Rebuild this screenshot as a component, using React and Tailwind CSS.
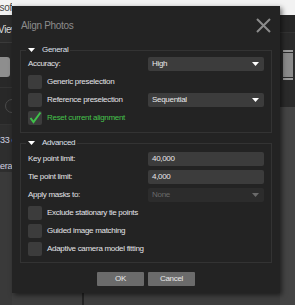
import React from 'react';

const Tri = ({ color = '#ffffff' }) => (
  <svg width="7" height="4" viewBox="0 0 7 4">
    <path d="M0 0h7L3.5 4z" fill={color} />
  </svg>
);

const Select = ({ value, disabled }) => (
  <div
    className={
      'w-[116px] h-[14px] rounded-[2px] flex items-center justify-between pl-[4px] pr-[5px] ' +
      (disabled ? 'bg-[#2c2c2c] text-[#6a6a6a]' : 'bg-[#3c3c3c] text-[#e8e8e8]')
    }
  >
    <span>{value}</span>
    <Tri color={disabled ? '#6a6a6a' : '#ffffff'} />
  </div>
);

const Input = ({ value }) => (
  <div className="w-[116px] h-[14px] rounded-[2px] bg-[#3c3c3c] text-[#e8e8e8] flex items-center pl-[4px]">
    {value}
  </div>
);

const Box = ({ checked }) => (
  <div className="w-[14px] h-[14px] rounded-[2px] bg-[#3c3c3c] flex items-center justify-center shrink-0">
    {checked && (
      <svg width="14" height="14" viewBox="0 0 14 14">
        <polyline points="2.5,7 5.5,11 12.5,1.5" fill="none" stroke="#3fc04a" strokeWidth="2" />
      </svg>
    )}
  </div>
);

const Check = ({ label, checked, green }) => (
  <div className="flex items-center">
    <Box checked={checked} />
    <span className={'ml-[5px] ' + (green ? 'text-[#45c24c]' : '')}>{label}</span>
  </div>
);

const Row = ({ children }) => <div className="flex items-center h-[14px]">{children}</div>;

const Group = ({ title, className, bodyClass, children }) => (
  <div className={className}>
    <div className="flex h-[10px]">
      <div className="w-[6px] mt-[5px] border-t border-l border-[#333333]" />
      <div className="flex items-center gap-[7px] px-[2px] text-[#dfe0ea]">
        <Tri />
        <span>{title}</span>
      </div>
      <div className="flex-1 mt-[5px] border-t border-r border-[#333333]" />
    </div>
    <div className={'border-x border-b border-[#333333] px-[7px] flex flex-col gap-[4px] ' + bodyClass}>
      {children}
    </div>
  </div>
);

export default function App() {
  return (
    <div className="relative w-[295px] h-[305px] overflow-hidden bg-[#3c3c3c] font-['Liberation_Sans',Arial,sans-serif] text-[8px] tracking-[-0.3px] text-[#e4e4e8]">
      {/* application behind the dialog */}
      <div className="flex h-full">
        <div className="w-[12px] flex flex-col">
          <div className="h-[15px] bg-[#f2f2f2] text-[#444] text-[10px] leading-[15px] whitespace-nowrap overflow-hidden">
            <span className="-ml-[14px] block">Agisoft</span>
          </div>
          <div className="h-[28px] bg-[#2c2c2c] text-[#dddddd] text-[10px] leading-[30px] whitespace-nowrap overflow-hidden border-b border-[#3a3a3a]">
            <span className="-ml-[2px] block">View</span>
          </div>
          <div className="h-[45px] bg-[#282828] pt-[14px] border-b border-[#333]">
            <div className="w-[10px] h-[20px] bg-[#8e8e8e] rounded-r-[3px]" />
          </div>
          <div className="h-[37px] bg-[#282828] flex items-center border-b border-[#333]">
            <div className="ml-[5px] w-[14px] h-[14px] rounded-full border border-[#4a4a4a] shrink-0" />
          </div>
          <div className="h-[47px] bg-[#2e2e2e] text-[#cfd0e0] text-[9px] whitespace-nowrap overflow-hidden pt-[9px] flex flex-col gap-[12px]">
            <span>33 c</span>
            <span className="-ml-[18px]">Camera:</span>
          </div>
          <div className="flex-1 bg-[#3a3a3a]" />
        </div>
        <div className="w-[268px] flex flex-col">
          <div className="h-[15px] bg-[#f2f2f2]" />
          <div className="flex-1 bg-[#2a2a2a]" />
          <div className="h-[12px] bg-[#3e3e3e] flex">
            <div className="w-[70px]" />
            <div className="w-[2px] bg-[#242424]" />
          </div>
        </div>
        <div className="w-[15px] flex flex-col">
          <div className="h-[15px] bg-[#f2f2f2]" />
          <div className="h-[18px] bg-[#262626] border-b border-[#333]" />
          <div className="h-[74px] bg-[#2a2a2a] pt-[17px] pl-[3px]">
            <div className="w-[10px] h-[2px] bg-[#9a9a9a]" />
            <div className="mt-[1px] w-[10px] h-[24px] bg-[#8a8a8a]" />
            <div className="mt-[1px] w-[10px] h-[2px] bg-[#9a9a9a]" />
          </div>
          <div className="flex-1 bg-[#444444]" />
        </div>
      </div>

      {/* dialog window */}
      <div className="absolute left-[12px] top-[6px] w-[268px] h-[287px] bg-[#232323] shadow-[2px_2px_5px_rgba(0,0,0,0.55)] px-[8px] flex flex-col">
        <div className="h-[39px] flex items-center justify-between pl-[1px] pr-[1px]">
          <span className="text-[10px] text-[#8c8c8c]">Align Photos</span>
          <svg width="15" height="15" viewBox="0 0 15 15">
            <path d="M1 1L14 14M14 1L1 14" stroke="#8c8c8c" strokeWidth="2" />
          </svg>
        </div>

        <Group title="General" bodyClass="pt-[2px] pb-[7px]">
          <Row>
            <span className="w-[120px]">Accuracy:</span>
            <Select value="High" />
          </Row>
          <Row>
            <Check label="Generic preselection" />
          </Row>
          <Row>
            <div className="w-[120px]">
              <Check label="Reference preselection" />
            </div>
            <Select value="Sequential" />
          </Row>
          <Row>
            <Check label="Reset current alignment" checked green />
          </Row>
        </Group>

        <Group title="Advanced" className="mt-[5px]" bodyClass="pt-[4px] pb-[6px]">
          <Row>
            <span className="w-[120px]">Key point limit:</span>
            <Input value="40,000" />
          </Row>
          <Row>
            <span className="w-[120px]">Tie point limit:</span>
            <Input value="4,000" />
          </Row>
          <Row>
            <span className="w-[120px]">Apply masks to:</span>
            <Select value="None" disabled />
          </Row>
          <Row>
            <Check label="Exclude stationary tie points" />
          </Row>
          <Row>
            <Check label="Guided image matching" />
          </Row>
          <Row>
            <Check label="Adaptive camera model fitting" />
          </Row>
        </Group>

        <div className="mt-[9px] flex justify-center gap-[4px]">
          <button className="w-[47px] h-[14px] bg-[#6b6b6b] text-[#e8e8e8] rounded-[1px]">OK</button>
          <button className="w-[47px] h-[14px] bg-[#6b6b6b] text-[#e8e8e8] rounded-[1px]">Cancel</button>
        </div>
      </div>
    </div>
  );
}
